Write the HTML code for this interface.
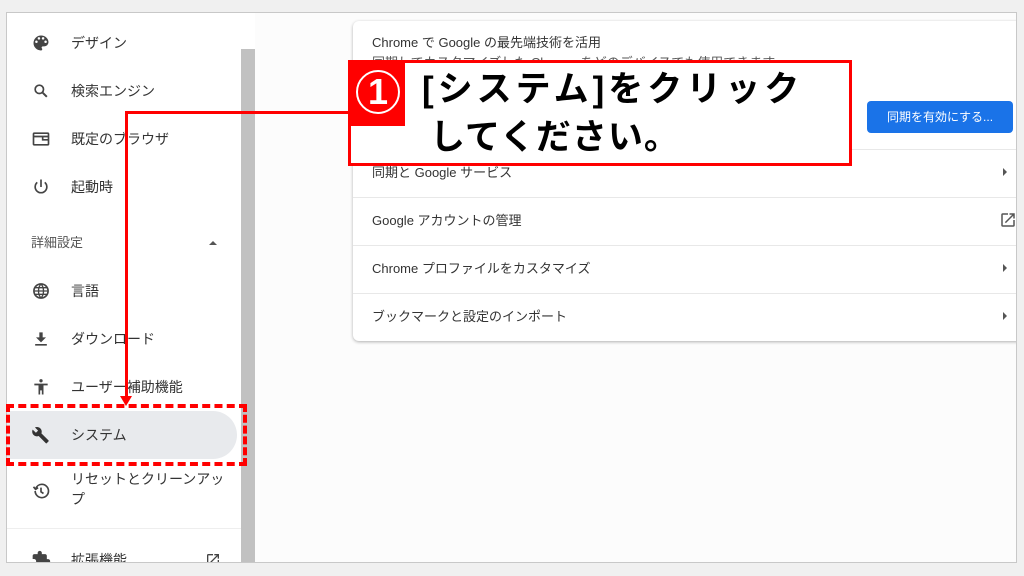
<!DOCTYPE html>
<html><head><meta charset="utf-8"><style>
*{margin:0;padding:0;box-sizing:border-box}
body{width:1024px;height:576px;background:#f0f0f0;position:relative;overflow:hidden;font-family:"Liberation Sans","Noto Sans CJK JP",sans-serif;color:#333}
.shot{position:absolute;left:6px;top:12px;width:1011px;height:551px;background:#fff;border:1px solid #c8c8c8;overflow:hidden}
.side{position:absolute;left:0;top:0;width:234px;height:551px;background:#fff}
.scroll{position:absolute;left:234px;top:36px;width:14px;height:520px;background:#c1c1c1}
.main{position:absolute;left:248px;top:0;right:0;height:551px;background:#fcfcfc}
.it{position:absolute;left:0;font-size:14px;color:#333;height:20px;line-height:20px}
.it .ic{position:absolute;left:24px;top:0;width:20px;height:20px}
.it span{position:absolute;left:64px;white-space:nowrap}
.card{position:absolute;left:346px;top:8px;width:680px;height:320px;background:#fff;border-radius:6px;box-shadow:0 1px 3px rgba(0,0,0,.3)}
.row{position:absolute;left:0;right:0;height:48px;border-top:1px solid #e8e8e8;font-size:13px;color:#333}
.row span{position:absolute;left:19px;top:12px}
.arr{position:absolute;right:26px;top:18px;width:0;height:0;border-top:4px solid transparent;border-bottom:4px solid transparent;border-left:4px solid #555}
.btn{position:absolute;left:514px;top:80px;width:146px;height:32px;background:#1a73e8;border-radius:4px;color:#fff;font-size:12px;line-height:32px;text-align:center}
.red{position:absolute;background:#f00}
</style></head><body>
<div class="shot">
 <div class="side">
  <div class="it" style="top:20px"><svg class="ic" viewBox="0 0 24 24"><path fill="#444" d="M12 3a9 9 0 000 18c.8 0 1.5-.7 1.5-1.5 0-.4-.1-.7-.4-1-.2-.3-.4-.6-.4-1 0-.8.7-1.5 1.5-1.5H16a5 5 0 005-5c0-4.4-4-8-9-8zM6.5 12a1.5 1.5 0 110-3 1.5 1.5 0 010 3zm3-4a1.5 1.5 0 110-3 1.5 1.5 0 010 3zm5 0a1.5 1.5 0 110-3 1.5 1.5 0 010 3zm3 4a1.5 1.5 0 110-3 1.5 1.5 0 010 3z"/></svg><span>デザイン</span></div>
  <div class="it" style="top:68px"><svg class="ic" viewBox="0 0 24 24"><circle cx="10" cy="10" r="5" fill="none" stroke="#444" stroke-width="2"/><path d="M14 14l5 5" stroke="#444" stroke-width="2.4"/></svg><span>検索エンジン</span></div>
  <div class="it" style="top:116px"><svg class="ic" viewBox="0 0 24 24"><rect x="3" y="5" width="18" height="14" rx="1" fill="none" stroke="#444" stroke-width="2"/><path d="M3 9h18M14 9v4h7" stroke="#444" stroke-width="2" fill="none"/></svg><span>既定のブラウザ</span></div>
  <div class="it" style="top:164px"><svg class="ic" viewBox="0 0 24 24"><path d="M12 3v9M7.5 6.5a7 7 0 109 0" fill="none" stroke="#444" stroke-width="2"/></svg><span>起動時</span></div>
  <div class="it" style="top:220px;font-size:13px;color:#555"><span style="left:24px">詳細設定</span><div style="position:absolute;left:202px;top:8px;border-left:4px solid transparent;border-right:4px solid transparent;border-bottom:4px solid #555"></div></div>
  <div class="it" style="top:268px"><svg class="ic" viewBox="0 0 24 24"><circle cx="12" cy="12" r="8.5" fill="none" stroke="#444" stroke-width="2"/><path d="M3.5 12h17M12 3.5c-4 4.5-4 12.5 0 17M12 3.5c4 4.5 4 12.5 0 17M5 8h14M5 16h14" fill="none" stroke="#444" stroke-width="1.6"/></svg><span>言語</span></div>
  <div class="it" style="top:316px"><svg class="ic" viewBox="0 0 24 24"><path fill="#444" d="M10 4h4v6h4l-6 6-6-6h4zM5 18h14v2H5z"/></svg><span>ダウンロード</span></div>
  <div class="it" style="top:364px"><svg class="ic" viewBox="0 0 24 24"><circle cx="12" cy="4.5" r="2" fill="#444"/><path fill="#444" d="M4 8h16v2h-5v11h-2v-5h-2v5H9V10H4z"/></svg><span>ユーザー補助機能</span></div>
  <div style="position:absolute;left:0;top:398px;width:230px;height:48px;background:#e8eaed;border-radius:0 24px 24px 0"></div>
  <div class="it" style="top:412px"><svg class="ic" viewBox="0 0 24 24"><path fill="#333" d="M21 18.5l-8.5-8.5c.8-2 .4-4.4-1.3-6-1.8-1.8-4.4-2.1-6.5-1.1l3.8 3.8-2.6 2.6L2 5.5C1 7.6 1.4 10.3 3.2 12c1.6 1.6 4 2 6 1.2l8.5 8.5c.4.4 1 .4 1.3 0l2-2c.4-.3.4-.9 0-1.2z"/></svg><span>システム</span></div>
  <div class="it" style="top:456px;height:40px"><svg class="ic" style="top:12px" viewBox="0 0 24 24"><path d="M5 12a8 8 0 108-8 8 8 0 00-7.5 5.5M3 7l2.5 3L8.5 8" fill="none" stroke="#444" stroke-width="2"/><path d="M12 8v5l3 2" fill="none" stroke="#444" stroke-width="2"/></svg><span style="line-height:20px">リセットとクリーンアッ<br>プ</span></div>
  <div style="position:absolute;left:0;top:515px;width:234px;height:1px;background:#eee"></div>
  <div class="it" style="top:537px"><svg class="ic" viewBox="0 0 24 24"><path fill="#444" d="M20.5 11H19V7c0-1.1-.9-2-2-2h-4V3.5a2.5 2.5 0 00-5 0V5H4c-1.1 0-2 .9-2 2v3.8h1.5a2.7 2.7 0 010 5.4H2V20c0 1.1.9 2 2 2h3.8v-1.5a2.7 2.7 0 015.4 0V22H17c1.1 0 2-.9 2-2v-4h1.5a2.5 2.5 0 000-5z"/></svg><span>拡張機能</span><svg style="position:absolute;left:198px;top:2px" width="16" height="16" viewBox="0 0 24 24"><path d="M19 19H5V5h7V3H5a2 2 0 00-2 2v14a2 2 0 002 2h14a2 2 0 002-2v-7h-2zM14 3v2h3.6l-9.8 9.8 1.4 1.4L19 6.4V10h2V3z" fill="#444"/></svg></div>
 </div>
 <div class="scroll"></div>
 <div class="main"></div>
 <div class="card">
  <div style="position:absolute;left:19px;top:11px;font-size:13px;color:#333">Chrome で Google の最先端技術を活用</div>
  <div style="position:absolute;left:19px;top:31px;font-size:13px;color:#555">同期してカスタマイズした Chrome をどのデバイスでも使用できます</div>
  <div class="btn">同期を有効にする...</div>
  <div class="row" style="top:128px"><span>同期と Google サービス</span><div class="arr"></div></div>
  <div class="row" style="top:176px"><span>Google アカウントの管理</span><svg style="position:absolute;right:16px;top:13px" width="18" height="18" viewBox="0 0 24 24"><path d="M19 19H5V5h7V3H5a2 2 0 00-2 2v14a2 2 0 002 2h14a2 2 0 002-2v-7h-2zM14 3v2h3.6l-9.8 9.8 1.4 1.4L19 6.4V10h2V3z" fill="#555"/></svg></div>
  <div class="row" style="top:224px"><span>Chrome プロファイルをカスタマイズ</span><div class="arr"></div></div>
  <div class="row" style="top:272px"><span>ブックマークと設定のインポート</span><div class="arr"></div></div>
 </div>
</div>
<!-- annotation -->
<div style="position:absolute;left:348px;top:60px;width:504px;height:106px;border:3px solid #f00;background:#fff"></div>
<div class="red" style="left:348px;top:60px;width:57px;height:66px"></div>
<div style="position:absolute;left:356px;top:70px;width:44px;height:44px;border:2px solid #fff;border-radius:50%;color:#fff;font-size:36px;font-weight:bold;line-height:40px;text-align:center;font-family:'Liberation Sans',sans-serif">1</div>
<div style="position:absolute;left:422px;top:66px;font-size:35px;font-weight:bold;color:#000;line-height:48px;font-family:'Liberation Sans','Noto Sans CJK JP',sans-serif;letter-spacing:4px;white-space:nowrap">[システム]をクリック<br><span style="padding-left:8px;letter-spacing:1px">してください。</span></div>
<div class="red" style="left:125px;top:111px;width:223px;height:3px"></div>
<div class="red" style="left:125px;top:111px;width:3px;height:288px"></div>
<div style="position:absolute;left:120px;top:396px;border-left:6.5px solid transparent;border-right:6.5px solid transparent;border-top:10px solid #f00"></div>
<div style="position:absolute;left:6px;top:404px;width:241px;height:62px;border:4px dashed #f00"></div>
</body></html>
